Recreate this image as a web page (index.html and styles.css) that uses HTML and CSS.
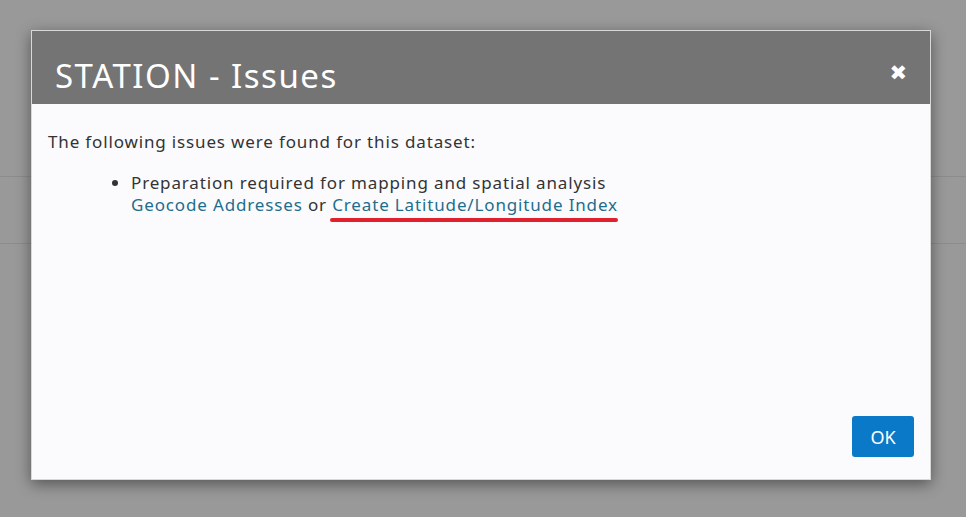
FILE: index.html
```html
<!DOCTYPE html>
<html>
<head>
<meta charset="utf-8">
<link rel="stylesheet" href="styles.css">
</head>
<body>
<div class="backdrop">
  <div class="bg-band"></div>
</div>
<div class="dialog">
  <div class="dialog-header">
    <h1 class="dialog-title">STATION - Issues</h1>
    <span class="close">&#x2716;</span>
  </div>
  <div class="dialog-body">
    <p class="intro">The following issues were found for this dataset:</p>
    <ul class="issues">
      <li>Preparation required for mapping and spatial analysis<br>
        <a class="link">Geocode Addresses</a> or <a class="link marked">Create Latitude/Longitude Index</a>
      </li>
    </ul>
  </div>
  <div class="dialog-footer">
    <button class="btn-ok">OK</button>
  </div>
</div>
</body>
</html>
```
FILE: styles.css
```css
html, body {
  margin: 0;
  padding: 0;
  width: 966px;
  height: 517px;
  overflow: hidden;
  background: #999999;
  font-family: "Noto Sans", "Open Sans", sans-serif;
}
.backdrop {
  position: absolute;
  inset: 0;
  padding-top: 176px;
}
.bg-band {
  height: 66px;
  border-top: 1px solid #8c8c8c;
  border-bottom: 1px solid #8c8c8c;
}
.dialog {
  position: absolute;
  left: 31px;
  top: 30px;
  width: 898px;
  height: 448px;
  border: 1px solid #d8d8d8;
  background: #fbfbfe;
  box-shadow: 0 4px 14px rgba(0,0,0,0.45);
  display: flex;
  flex-direction: column;
}
.dialog-header {
  height: 73px;
  background: #747474;
  display: flex;
  align-items: center;
  justify-content: space-between;
  padding: 0 23px 0 23px;
}
.dialog-title {
  margin: 16px 0 0 0;
  font-weight: normal;
  font-size: 33px;
  color: #ffffff;
  letter-spacing: 1.5px;
}
.close {
  color: #ffffff;
  font-size: 21px;
  font-family: "DejaVu Sans", sans-serif;
  margin-top: 10px;
}
.dialog-body {
  flex: 1;
  padding: 0 16px;
  color: #333333;
  font-size: 17px;
  letter-spacing: 0.85px;
}
.intro {
  margin: 27px 0 0 0;
  line-height: 22px;
}
.issues {
  margin: 19px 0 0 0;
  padding-left: 83px;
  line-height: 22px;
}
.link {
  color: #1f6d8c;
}
.marked {
  position: relative;
}
.marked::after {
  content: "";
  position: absolute;
  left: -2px;
  right: 0;
  bottom: -6px;
  height: 4px;
  border-radius: 2px;
  background: #e0202c;
}
.dialog-footer {
  display: flex;
  justify-content: flex-end;
  padding: 0 16px 22px 0;
}
.btn-ok {
  width: 62px;
  height: 41px;
  border: none;
  border-radius: 3px;
  background: #0a7ac8;
  color: #ffffff;
  font-family: "Noto Sans", "Open Sans", sans-serif;
  font-size: 18px;
  padding: 0;
}
```
